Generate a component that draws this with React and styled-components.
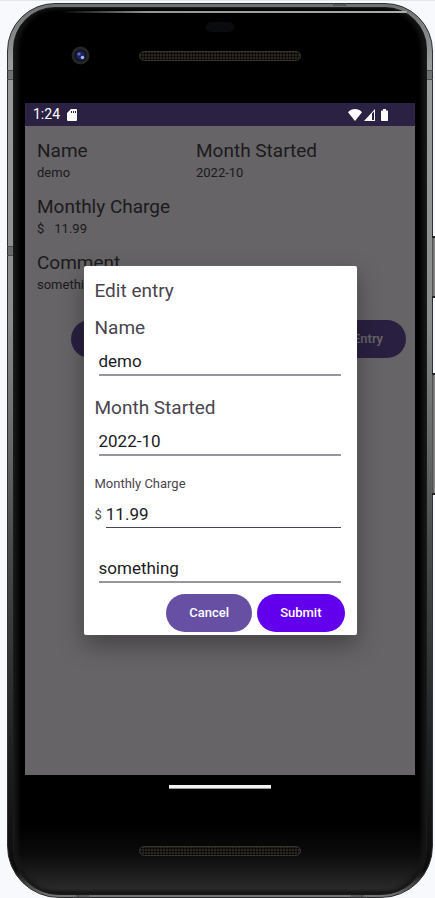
import React, { useState } from "react";
import styled, { createGlobalStyle } from "styled-components";

const GlobalStyle = createGlobalStyle`
  *, *::before, *::after { box-sizing: border-box; }
  body {
    margin: 0;
    background: #f7f9fc;
    font-family: Roboto, "Noto Sans", sans-serif;
    overflow-x: hidden;
  }
  button, input { font-family: inherit; }
`;

const Page = styled.div`
  min-height: 100vh;
  display: flex;
  flex-direction: column;
  padding: 2px 2px 0 7px;
  border-top: 1px solid #e4e7ea;
  overflow: hidden;
`;

const Phone = styled.div`
  position: relative;
  flex: 1;
  display: flex;
  flex-direction: column;
  padding: 3px 5px 2px;
  border: 1px solid #2c2e2f;
  border-radius: 48px 48px 52px 52px;
  background: linear-gradient(#6f7273 0, #9a9c9c 60px, #8b8d8d 35%, #4b4c4c 60%, #1c1d1e 85%, #0c0c0c 97%, #777 100%);
`;

const Band = styled.span`
  position: absolute;
  z-index: 1;
  background: rgba(50, 52, 54, 0.4);
  border: solid #4c4e50;
  border-width: ${(p) => (p.$horizontal ? "0 1px" : "1px 0")};
  width: ${(p) => (p.$horizontal ? 13 : 6)}px;
  height: ${(p) => (p.$horizontal ? 3 : 10)}px;
  top: ${(p) => p.$top};
  bottom: ${(p) => p.$bottom};
  left: ${(p) => p.$left};
  right: ${(p) => p.$right};
`;

const SideKey = styled.span`
  position: absolute;
  right: -3px;
  top: ${(p) => p.$top}px;
  width: 3px;
  height: ${(p) => p.$length}px;
  border: solid #222;
  border-width: 2px 0;
  background: linear-gradient(90deg, #444, #999);
`;

const Glass = styled.div`
  flex: 1;
  display: flex;
  flex-direction: column;
  padding: 0 11px;
  border: 1px solid #1b1b1b;
  border-radius: 42px 42px 46px 46px;
  background: linear-gradient(#000 calc(100% - 70px), #0b0b0b calc(100% - 40px), #2a2a2a calc(100% - 5px), #111 100%);
  box-shadow: inset 4px 0 4px #161616, inset -4px 0 4px #161616;
`;

const TopBezel = styled.header`
  height: 95px;
  display: flex;
  flex-direction: column;
  align-items: center;
`;

const Glint = styled.div`
  align-self: stretch;
  height: 2px;
  margin: 3px 8px 0 36px;
  border-radius: 2px;
  background: linear-gradient(90deg, transparent, #929695 25%, #a9adab);
`;

const Sensor = styled.div`
  width: 28px;
  height: 10px;
  margin-top: 9px;
  border-radius: 5px;
  background: #090b0e;
`;

const EarpieceRow = styled.div`
  align-self: stretch;
  display: grid;
  grid-template-columns: 1fr 162px 1fr;
  align-items: center;
  margin-top: 14px;
`;

const Camera = styled.svg`
  display: block;
  width: 19px;
  height: 19px;
  margin-left: 46px;
`;

const Speaker = styled.div`
  width: 162px;
  height: 10px;
  border: 1px solid #35332f;
  border-radius: 5px;
  background: radial-gradient(circle, #000 30%, #37332b 80%) 0 0 / 3px 3px;
`;

const Screen = styled.main`
  flex: 1;
  display: flex;
  flex-direction: column;
  background: #fffbfe;
`;

const StatusBar = styled.div`
  height: 23px;
  display: flex;
  align-items: center;
  gap: 7px;
  padding: 0 27px 0 8px;
  background: #2b2143;
  color: #fff;
  font-size: 14px;
  line-height: 23px;
`;

const StatusIcon = styled.svg`
  display: block;
  height: 12px;
  width: ${(p) => p.$width}px;
  fill: #fff;
`;

const SystemIcons = styled.div`
  display: flex;
  align-items: center;
  gap: 2px;
  margin-left: auto;
`;

const BatteryIcon = styled(StatusIcon)`
  margin-left: 4px;
`;

const AppBody = styled.div`
  position: relative;
  flex: 1;
  padding: 13px 9px 0 12px;
  color: #49454f;
`;

const Details = styled.dl`
  display: grid;
  grid-template-columns: 159px 1fr;
  row-gap: 12px;
  margin: 0;
`;

const Detail = styled.div`
  grid-column: ${(p) => (p.$wide ? "1 / -1" : "auto")};
`;

const Term = styled.dt`
  font-size: 19px;
  line-height: 24px;
`;

const Value = styled.dd`
  display: flex;
  gap: 10px;
  margin: 0;
  font-size: 13px;
  line-height: 20px;
`;

const Actions = styled.div`
  display: flex;
  justify-content: flex-end;
  gap: ${(p) => p.$gap}px;
  margin-top: ${(p) => p.$top}px;
`;

const PillButton = styled.button`
  height: 38px;
  padding: 0 23px;
  border: 0;
  border-radius: 19px;
  background: ${(p) => (p.$primary ? "#6200ee" : "#6750a4")};
  color: #fff;
  font-size: 13px;
  font-weight: 500;
  line-height: 20px;
`;

const EntryButton = styled(PillButton)`
  flex: 0 1 165px;
  text-align: right;
`;

const Scrim = styled.div`
  position: absolute;
  inset: 0;
  display: flex;
  align-items: center;
  justify-content: center;
  background: rgba(0, 0, 0, 0.6);
`;

const Dialog = styled.form`
  width: 70%;
  padding: 13px 12px 3px 11px;
  border-radius: 2px;
  background: #fff;
  color: #49454f;
  box-shadow: 0 0 1px rgba(150, 155, 150, 0.6), 0 10px 24px rgba(0, 0, 0, 0.35);
`;

const Title = styled.h1`
  margin: 0 0 13px;
  font-size: 19px;
  font-weight: 400;
  line-height: 24px;
`;

const Field = styled.div`
  margin-bottom: ${(p) => p.$bottom}px;
`;

const Label = styled.label`
  display: block;
  margin-bottom: ${(p) => (p.$small ? 6 : 8)}px;
  font-size: ${(p) => (p.$small ? 13 : 19)}px;
  line-height: ${(p) => (p.$small ? 20 : 24)}px;
`;

const InputRow = styled.div`
  display: flex;
  align-items: center;
  gap: 4px;
  padding: 0 4px 0 ${(p) => (p.$prefixed ? 0 : 4)}px;
  font-size: 13px;
`;

const TextInput = styled.input`
  flex: 1;
  min-width: 0;
  width: 100%;
  height: 28px;
  padding: 0;
  border: 0;
  border-bottom: ${(p) => (p.$thin ? "1px solid #49454f" : "2px solid #98959c")};
  border-radius: 0;
  outline: 0;
  background: transparent;
  color: #1c1b1f;
  font-size: 17px;
  line-height: 24px;
`;

const BottomBezel = styled.footer`
  height: 119px;
  display: flex;
  flex-direction: column;
  align-items: center;
`;

const HomeBar = styled.div`
  width: 102px;
  height: 4px;
  margin: 10px 0 57px;
  border-bottom: 1px solid #999;
  background: #f1f1f1;
`;

export default function App() {
  const [entry, setEntry] = useState({
    name: "demo",
    month: "2022-10",
    charge: "11.99",
    comment: "something",
  });
  const bind = (key) => ({
    value: entry[key],
    onChange: (e) => setEntry({ ...entry, [key]: e.target.value }),
  });

  return (
    <>
      <GlobalStyle />
      <Page>
        <Phone>
          <Band $top="66px" $left="-1px" />
          <Band $top="66px" $right="-1px" />
          <Band $top="242px" $left="-1px" />
          <Band $top="-1px" $right="86px" $horizontal />
          <Band $bottom="-1px" $left="68px" $horizontal />
          <Band $bottom="-1px" $right="68px" $horizontal />
          <SideKey $top={232} $length={62} />
          <SideKey $top={369} $length={122} />
          <Glass>
            <TopBezel>
              <Glint />
              <Sensor />
              <EarpieceRow>
                <Camera viewBox="0 0 19 19" aria-hidden="true">
                  <circle cx="9.5" cy="9.5" r="9" fill="#262626" />
                  <circle cx="9.5" cy="9.5" r="6" fill="#10101a" />
                  <circle cx="9.5" cy="9.5" r="4.5" fill="#1b235c" />
                  <circle cx="8" cy="8" r="1.6" fill="#5670cc" />
                  <circle cx="11.5" cy="11.5" r="1.8" fill="#a3b3f2" />
                </Camera>
                <Speaker />
              </EarpieceRow>
            </TopBezel>
            <Screen>
              <StatusBar>
                <span>1:24</span>
                <StatusIcon $width={10} viewBox="0 0 10 12" aria-hidden="true">
                  <path
                    fillRule="evenodd"
                    d="M4 0h5a1 1 0 0 1 1 1v10a1 1 0 0 1-1 1H1a1 1 0 0 1-1-1V4zM4 2v2h1V2zM6 2v2h1V2zM8 2v2h1V2z"
                  />
                </StatusIcon>
                <SystemIcons>
                  <StatusIcon $width={14} viewBox="0 0 14 12" aria-hidden="true">
                    <path d="M7 12 0 3.2C2 1.2 4.3 0 7 0s5 1.2 7 3.2z" />
                  </StatusIcon>
                  <StatusIcon $width={11} viewBox="0 0 11 12" aria-hidden="true">
                    <path fillRule="evenodd" d="M11 0v12H0zM8 4.5V11h2V2.5z" />
                  </StatusIcon>
                  <BatteryIcon $width={7} viewBox="0 0 7 12" aria-hidden="true">
                    <path d="M2 0h3v1.500h1.500L7 2v9.500l-.5.5h-6l-.5-.5V2l.5-.5H2z" />
                  </BatteryIcon>
                </SystemIcons>
              </StatusBar>
              <AppBody>
                <Details>
                  <Detail>
                    <Term>Name</Term>
                    <Value>demo</Value>
                  </Detail>
                  <Detail>
                    <Term>Month Started</Term>
                    <Value>2022-10</Value>
                  </Detail>
                  <Detail $wide>
                    <Term>Monthly Charge</Term>
                    <Value>
                      <span>$</span>
                      <span>11.99</span>
                    </Value>
                  </Detail>
                  <Detail $wide>
                    <Term>Comment</Term>
                    <Value>something</Value>
                  </Detail>
                </Details>
                <Actions $gap={5} $top={25}>
                  <EntryButton type="button">Edit Entry</EntryButton>
                  <EntryButton type="button">Delete Entry</EntryButton>
                </Actions>
                <Scrim>
                  <Dialog
                    role="dialog"
                    aria-labelledby="dialog-title"
                    onSubmit={(e) => e.preventDefault()}
                  >
                    <Title id="dialog-title">Edit entry</Title>
                    <Field $bottom={20}>
                      <Label htmlFor="name">Name</Label>
                      <InputRow>
                        <TextInput id="name" {...bind("name")} />
                      </InputRow>
                    </Field>
                    <Field $bottom={18}>
                      <Label htmlFor="month">Month Started</Label>
                      <InputRow>
                        <TextInput id="month" {...bind("month")} />
                      </InputRow>
                    </Field>
                    <Field $bottom={27}>
                      <Label htmlFor="charge" $small>
                        Monthly Charge
                      </Label>
                      <InputRow $prefixed>
                        <span>$</span>
                        <TextInput id="charge" $thin {...bind("charge")} />
                      </InputRow>
                    </Field>
                    <InputRow>
                      <TextInput aria-label="Comment" {...bind("comment")} />
                    </InputRow>
                    <Actions $gap={5} $top={11}>
                      <PillButton type="button">Cancel</PillButton>
                      <PillButton type="submit" $primary>
                        Submit
                      </PillButton>
                    </Actions>
                  </Dialog>
                </Scrim>
              </AppBody>
            </Screen>
            <BottomBezel>
              <HomeBar />
              <Speaker />
            </BottomBezel>
          </Glass>
        </Phone>
      </Page>
    </>
  );
}
